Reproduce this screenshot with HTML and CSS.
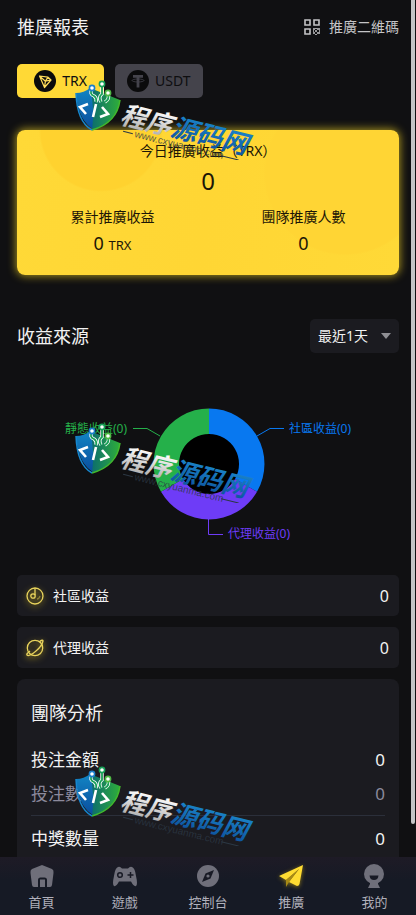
FILE: index.html
```html
<!DOCTYPE html>
<html lang="zh-Hant">
<head>
  <meta charset="utf-8">
  <meta name="viewport" content="width=device-width, initial-scale=1">
  <title>推廣報表</title>
  <link rel="stylesheet" href="styles.css">
</head>
<body>

  <!-- Shared watermark artwork -->
  <svg class="defs" aria-hidden="true">
    <defs>
      <linearGradient id="shieldBlue" x1="0" y1="0" x2="0" y2="1">
        <stop offset="0" stop-color="#1285c4"/>
        <stop offset="1" stop-color="#0a4c9c"/>
      </linearGradient>
      <linearGradient id="shieldGreen" x1="0" y1="0" x2="1" y2="0">
        <stop offset="0" stop-color="#0a6a70"/>
        <stop offset="1" stop-color="#2fae3a"/>
      </linearGradient>
      <linearGradient id="silver" x1="0" y1="0" x2="0" y2="1">
        <stop offset="0.2" stop-color="#ffffff"/>
        <stop offset="1" stop-color="#a4a4a4"/>
      </linearGradient>
      <linearGradient id="blueText" x1="0" y1="0" x2="0" y2="1">
        <stop offset="0.2" stop-color="#1a83c8"/>
        <stop offset="1" stop-color="#0c4d98"/>
      </linearGradient>
      <symbol id="watermark" viewBox="0 0 180 80">
        <path d="M1 13Q9 13 15 8L23 22L20 50Q3 42 1 13Z" fill="url(#shieldBlue)"/>
        <path d="M15 8L30 14L45 20Q42 43 17 50Q20 28 15 8Z" fill="url(#shieldGreen)"/>
        <path d="M45 20Q42 43 17 50" fill="none" stroke="#43b82c" stroke-width="1.5"/>
        <path d="M1 13Q2 42 17 50" fill="none" stroke="#1687cf" stroke-width="1.5"/>
        <g fill="none" stroke="#fff" stroke-width="3.4">
          <path d="M17 9Q14 14 19 16Q22 18 21 22M27 5V14Q23 17 26 22M33 14Q35 19 30 22"/>
        </g>
        <g fill="none" stroke="#18a058" stroke-width="1.8">
          <path d="M17 9Q14 14 19 16Q22 18 21 22M27 5V14Q23 17 26 22M33 14Q35 19 30 22"/>
        </g>
        <circle cx="17" cy="8" r="2.6" fill="#fff" stroke="#1a7fca" stroke-width="1.6"/>
        <circle cx="27" cy="4" r="2.6" fill="#fff" stroke="#18a058" stroke-width="1.6"/>
        <circle cx="33" cy="13" r="2.6" fill="#fff" stroke="#4fb944" stroke-width="1.6"/>
        <path d="M13 24L5 27L11 34M21 24L18 37M27 27L33 34L25 37" fill="none" stroke="#fff" stroke-width="2.6"/>
        <g transform="translate(44 43) rotate(14)">
          <text class="mark-name" x="0" y="0"><tspan fill="url(#silver)">程序</tspan><tspan fill="url(#blueText)">源码网</tspan></text>
          <text class="mark-url" x="18" y="10">www.cxyuanma.com</text>
          <path class="mark-rule" d="M6 7H16M107 7H125"/>
        </g>
      </symbol>
    </defs>
  </svg>

  <div class="app">
    <main class="page">

      <header class="header">
        <h1 class="title">推廣報表</h1>
        <a class="qr-link" href="#qr">
          <svg class="qr-icon" viewBox="0 0 16 16" fill="none" stroke="currentColor" stroke-width="1.6">
            <path d="M1 1h5v5H1zM10 1h5v5h-5zM1 10h5v5H1z"/>
            <path d="M9 10h2M13 10h3M11 12h2M9 14h2M13 14h3M12 9v1M15 12h1M9 12h1M12 15v1"/>
          </svg>
          推廣二維碼
        </a>
      </header>

      <!-- Currency tabs -->
      <div class="tabs">
        <button class="tab active" type="button">
          <svg class="coin" viewBox="0 0 22 22">
            <circle cx="11" cy="11" r="11" fill="#0b0b0c"/>
            <path d="M5.500 6L14 7.200L17 10L10.500 17.500ZM5.500 6L11.400 11.200L17 10M11.400 11.200L10.500 17.500M11.400 11.200L14 7.200" fill="none" stroke="#ffdc5a" stroke-width="1.200" stroke-linejoin="round"/>
          </svg>
          TRX
        </button>
        <button class="tab" type="button">
          <svg class="coin" viewBox="0 0 22 22">
            <circle cx="11" cy="11" r="11" fill="#0b0b0c"/>
            <path d="M6 5h10v2.800H12.400V17.500H9.600V7.800H6z" fill="#44434b"/>
            <ellipse cx="11" cy="10.500" rx="6" ry="1.500" fill="none" stroke="#44434b" stroke-width=".8"/>
          </svg>
          USDT
        </button>
      </div>

      <!-- Income card -->
      <section class="card">
        <div class="card-label">今日推廣收益（TRX）</div>
        <div class="card-total">0</div>
        <div class="card-columns">
          <div class="card-col">
            <div class="card-label">累計推廣收益</div>
            <div class="card-value">0 <small>TRX</small></div>
          </div>
          <div class="card-col">
            <div class="card-label">團隊推廣人數</div>
            <div class="card-value">0</div>
          </div>
        </div>
      </section>

      <!-- Income source -->
      <div class="source-head">
        <h2 class="title" id="sourceTitle">收益來源</h2>
        <div class="range">
          <select class="range-select" aria-label="時間範圍">
            <option>最近1天</option>
            <option>最近7天</option>
            <option>最近30天</option>
          </select>
        </div>
      </div>

      <svg class="chart" viewBox="0 0 382 222" role="img" aria-labelledby="sourceTitle">
        <circle cx="192" cy="111" r="31" fill="#000"/>
        <path d="M192 55.500A55.500 55.500 0 0 1 240 138.800L218 126A30 30 0 0 0 192 81Z" fill="#0878f0"/>
        <path d="M240 138.800A55.500 55.500 0 0 1 144 138.800L166 126A30 30 0 0 0 218 126Z" fill="#6e3cf7"/>
        <path d="M144 138.800A55.500 55.500 0 0 1 192 55.500V81A30 30 0 0 0 166 126Z" fill="#25b04a"/>
        <g fill="none">
          <path d="M240 83L253 75.500H267" stroke="#0878f0"/>
          <path d="M143 83L130 75.500H116" stroke="#25b04a"/>
          <path d="M191.500 166V181.500H206" stroke="#6e3cf7"/>
        </g>
        <text x="272" y="80" fill="#0878f0">社區收益(0)</text>
        <text x="110" y="80" fill="#25b04a" text-anchor="end">靜態收益(0)</text>
        <text x="211" y="185" fill="#6e3cf7">代理收益(0)</text>
      </svg>

      <ul class="income-list">
        <li class="income-row">
          <svg class="income-icon" viewBox="0 0 18 18" fill="none" stroke="#e8d35c" stroke-width="1.300">
            <circle cx="9" cy="9" r="8"/>
            <path d="M9 1V8"/>
            <circle cx="7" cy="9" r="2.200"/>
            <path d="M11 12Q13 12 14 9" stroke="#8d8038"/>
          </svg>
          <span class="income-name">社區收益</span>
          <span>0</span>
        </li>
        <li class="income-row">
          <svg class="income-icon" viewBox="0 0 18 18" fill="none" stroke="#e8d35c" stroke-width="1.300">
            <circle cx="9" cy="9" r="7.700"/>
            <path d="M13 3Q17 0 17 2Q16 7 10 12Q3 18 1 16Q0 15 4 12"/>
          </svg>
          <span class="income-name">代理收益</span>
          <span>0</span>
        </li>
      </ul>

      <!-- Team analysis -->
      <section class="team">
        <h2 class="title">團隊分析</h2>
        <div class="team-group">
          <div class="team-row"><span>投注金額</span><span>0</span></div>
          <div class="team-row muted"><span>投注數量</span><span>0</span></div>
        </div>
        <div class="team-group">
          <div class="team-row"><span>中獎數量</span><span>0</span></div>
        </div>
      </section>

      <svg class="watermark mark-top" aria-hidden="true"><use href="#watermark"/></svg>
      <svg class="watermark mark-middle" aria-hidden="true"><use href="#watermark"/></svg>
      <svg class="watermark mark-bottom" aria-hidden="true"><use href="#watermark"/></svg>
    </main>

    <nav class="nav">
      <a class="nav-item" href="#home">
        <svg class="nav-icon" viewBox="0 0 24 24">
          <path d="M12 1L22 5Q24 6 23.500 9L22 21Q21.700 23 20 23H17V16Q17 13.500 14.500 13.500H10.500Q8 13.500 8 16V23H4Q2.300 23 2 21L.5 9Q0 6 2 5Z" fill="currentColor"/>
          <path d="M10 23V15.500H15V23Z" fill="currentColor"/>
        </svg>
        首頁
      </a>
      <a class="nav-item" href="#games">
        <svg class="nav-icon" viewBox="0 0 24 24">
          <path d="M5 3Q7 2 9 4.500H15Q17 2 19 3Q22 4 23 12Q25 20.500 23 22Q21 23 18 17.500H6Q3 23 1 22Q-1 20.500 1 12Q2 4 5 3Z" fill="currentColor"/>
          <circle cx="7" cy="11" r="2.300" fill="none" stroke="#181a25" stroke-width="1.500"/>
          <path d="M17.500 8V14M14.500 11H20.500" stroke="#181a25" stroke-width="1.500"/>
        </svg>
        遊戲
      </a>
      <a class="nav-item" href="#console">
        <svg class="nav-icon" viewBox="0 0 24 24">
          <circle cx="12" cy="12" r="11" fill="currentColor"/>
          <path d="M18 6L14.500 14.500L6 18L9.500 9.500Z" fill="#181a25"/>
          <circle cx="12" cy="12" r="1.600" fill="currentColor"/>
        </svg>
        控制台
      </a>
      <a class="nav-item current" href="#promote" aria-current="page">
        <svg class="nav-icon" viewBox="0 0 24 24">
          <path d="M24 1L0 12L7 16L20 5L10 18L18 22Q20 22 20.500 20Z" fill="#ffdc32"/>
          <path d="M7 16L20 5L10 18L7 23Z" fill="#a88b16"/>
        </svg>
        推廣
      </a>
      <a class="nav-item" href="#mine">
        <svg class="nav-icon" viewBox="0 0 24 24">
          <circle cx="12" cy="10" r="10" fill="currentColor"/>
          <path d="M8 17H16V20L18 24H6L8 20Z" fill="currentColor"/>
          <path d="M7.500 11.500H16.500Q16 16 12 16Q8 16 7.500 11.500Z" fill="#181a25"/>
        </svg>
        我的
      </a>
    </nav>
    <div class="scroll-thumb"></div>
  </div>

</body>
</html>
```
FILE: styles.css
```css
* {
  box-sizing: border-box;
}

body {
  margin: 0;
  background: #101012;
  color: #f2f2f2;
  font-family: "Noto Sans", "Noto Sans CJK TC", sans-serif;
  font-size: 14px;
  line-height: 20px;
}

button, select {
  font: inherit;
}

.defs {
  position: absolute;
  width: 0;
  height: 0;
}

.app {
  display: flex;
  flex-direction: column;
  height: 100vh;
  position: relative;
}

.page {
  flex: 1;
  min-height: 0;
  overflow-y: auto;
  scrollbar-width: none;
  padding: 0 17px 24px;
  position: relative;
}

.title {
  margin: 0;
  font-size: 18px;
  font-weight: 400;
  line-height: 26px;
}

/* Header */
.header {
  display: flex;
  align-items: center;
  justify-content: space-between;
  height: 54px;
}

.qr-link {
  display: flex;
  align-items: center;
  gap: 9px;
  color: #c4c4c6;
  text-decoration: none;
}

.qr-icon {
  width: 16px;
  height: 16px;
}

/* Currency tabs */
.tabs {
  display: flex;
  gap: 11px;
  margin-top: 10px;
}

.tab {
  display: flex;
  align-items: center;
  justify-content: center;
  gap: 6px;
  min-width: 87px;
  height: 34px;
  padding: 0 12px;
  border: none;
  border-radius: 5px;
  background: #44434b;
  color: #0e0e10;
  cursor: pointer;
}

.tab.active {
  background: #ffd936;
}

.coin {
  width: 22px;
  height: 22px;
}

/* Income card */
.card {
  margin-top: 32px;
  padding: 11px 0 18px;
  border-radius: 8px;
  background:
    radial-gradient(circle at 22% 0, #ffd22f 0 60px, transparent 62px),
    radial-gradient(circle at 86% 30%, #ffd534 0 80px, transparent 82px),
    linear-gradient(100deg, #ffd937, #ffd634 50%, #ffd937);
  box-shadow: 0 0 8px 1px #a8931f;
  color: #1c1606;
  text-align: center;
}

.card-total {
  margin-top: 4px;
  font-size: 24px;
  line-height: 32px;
}

.card-columns {
  display: grid;
  grid-template-columns: 1fr 1fr;
  margin-top: 10px;
}

.card-value {
  margin-top: 4px;
  font-size: 18px;
  line-height: 24px;
}

.card-value small {
  font-size: 13px;
}

/* Income source */
.source-head {
  display: flex;
  align-items: center;
  justify-content: space-between;
  margin-top: 44px;
}

.range {
  position: relative;
}

.range::after {
  content: "";
  position: absolute;
  top: 14px;
  right: 8px;
  border: 5px solid transparent;
  border-top: 6px solid #8f8f94;
  border-bottom: none;
  pointer-events: none;
}

.range-select {
  appearance: none;
  display: block;
  width: 89px;
  height: 34px;
  padding: 0 8px;
  border: none;
  border-radius: 5px;
  background: #1b1b20;
  color: #f2f2f2;
}

.chart {
  display: block;
  width: 100%;
  max-height: 320px;
  font-size: 12px;
}

/* Income rows */
.income-list {
  margin: 0;
  padding: 0;
  list-style: none;
}

.income-row {
  display: flex;
  align-items: center;
  gap: 9px;
  height: 41px;
  margin-bottom: 11px;
  padding: 0 10px 0 9px;
  border-radius: 5px;
  background: #1b1b20;
}

.income-row span:last-child {
  font-size: 16px;
}

.income-name {
  flex: 1;
}

.income-icon {
  width: 18px;
  height: 18px;
  filter: drop-shadow(0 2px 3px #a8931f);
}

/* Team analysis */
.team {
  padding: 21px 14px 48px;
  border-radius: 8px;
  background: #1b1b20;
}

.team .title {
  margin-bottom: 17px;
}

.team-group {
  padding-bottom: 4px;
  margin-bottom: 6px;
  border-bottom: 1px solid #2b2f3a;
}

.team-row {
  display: flex;
  justify-content: space-between;
  font-size: 17px;
  line-height: 34px;
}

.muted {
  color: #8c8a9c;
}

/* Bottom navigation */
.nav {
  display: grid;
  grid-template-columns: repeat(5, 1fr);
  height: 58px;
  background: linear-gradient(#1e1b26, #161a25 40%);
}

.nav-item {
  display: flex;
  flex-direction: column;
  align-items: center;
  gap: 5px;
  padding-top: 7px;
  color: #b0b0bb;
  font-size: 13px;
  line-height: 18px;
  text-decoration: none;
}

.nav-icon {
  width: 24px;
  height: 24px;
  color: #6f6f7a;
}

.current .nav-icon {
  filter: drop-shadow(0 1px 2px #8a7518);
}

.scroll-thumb {
  position: absolute;
  top: 0;
  right: 1px;
  width: 4px;
  height: 90%;
  border-radius: 0 0 2px 2px;
  background: #c4c4c6;
}

/* Watermark */
.watermark {
  position: absolute;
  left: 75px;
  width: 180px;
  height: 80px;
  pointer-events: none;
}

.mark-top {
  top: 80px;
}

.mark-middle {
  top: 423px;
}

.mark-bottom {
  top: 766px;
}

.mark-name {
  font-family: "Noto Sans CJK SC", sans-serif;
  font-size: 26px;
  font-weight: 700;
  font-style: italic;
}

.mark-url {
  font-family: "Liberation Sans", sans-serif;
  font-size: 10px;
  fill: #2c3844;
  fill-opacity: 0.8;
}

.mark-rule {
  stroke: #2c3844;
  stroke-width: 1px;
}
```
